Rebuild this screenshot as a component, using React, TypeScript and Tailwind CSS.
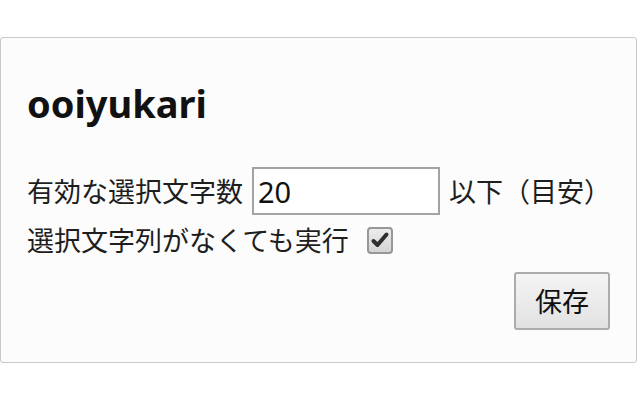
const jp = { fontFamily: '"Noto Sans CJK JP", "Noto Sans", sans-serif' };

function CheckMark() {
  return (
    <span className="flex h-[27px] w-[26px] items-center justify-center rounded-[4px] border-2 border-[#979797] bg-gradient-to-b from-[#ececec] to-[#d4d4d4]">
      <svg width="20" height="20" viewBox="0 0 20 20">
        <path d="M3.5 11 L7.5 15 L16.5 4.5" fill="none" stroke="#2f2f2f" strokeWidth="4" strokeLinecap="round" strokeLinejoin="round" />
      </svg>
    </span>
  );
}

export default function App() {
  return (
    <div className="h-[400px] w-[640px] overflow-hidden bg-white pt-[37px]">
      <div
        className="flex h-[326px] w-[637px] flex-col rounded-[3px] border border-[#c8c8c8] bg-[#fcfcfc] px-[26px] text-[#1e1e1e]"
        style={jp}
      >
        <h1
          className="mt-[40px] text-[38px] font-bold leading-[50px] text-[#111]"
          style={{ fontFamily: '"Noto Sans", sans-serif' }}
        >
          ooiyukari
        </h1>
        <div className="mt-[39px] flex items-center whitespace-nowrap text-[27px] leading-[36px]">
          <span className="shrink-0">有効な選択文字数</span>
          <input
            defaultValue="20"
            className="ml-[9px] h-[48px] w-[188px] shrink-0 border-2 border-[#a3a3a3] bg-white px-[4px] text-[29px] text-[#111] outline-none"
            style={{ fontFamily: '"Noto Sans", sans-serif' }}
          />
          <span className="ml-[9px] shrink-0">以下（目安）</span>
        </div>
        <div className="mt-[7px] flex items-center whitespace-nowrap text-[27px] leading-[36px]">
          <span>選択文字列がなくても実行</span>
          <span className="ml-[18px]">
            <CheckMark />
          </span>
        </div>
        <div className="mt-[14px] flex justify-end">
          <button
            className="h-[58px] w-[96px] rounded-[3px] border-2 border-[#acacac] bg-gradient-to-b from-[#f4f4f4] to-[#e2e2e2] text-[27px] text-[#111]"
            style={jp}
          >
            保存
          </button>
        </div>
      </div>
    </div>
  );
}
